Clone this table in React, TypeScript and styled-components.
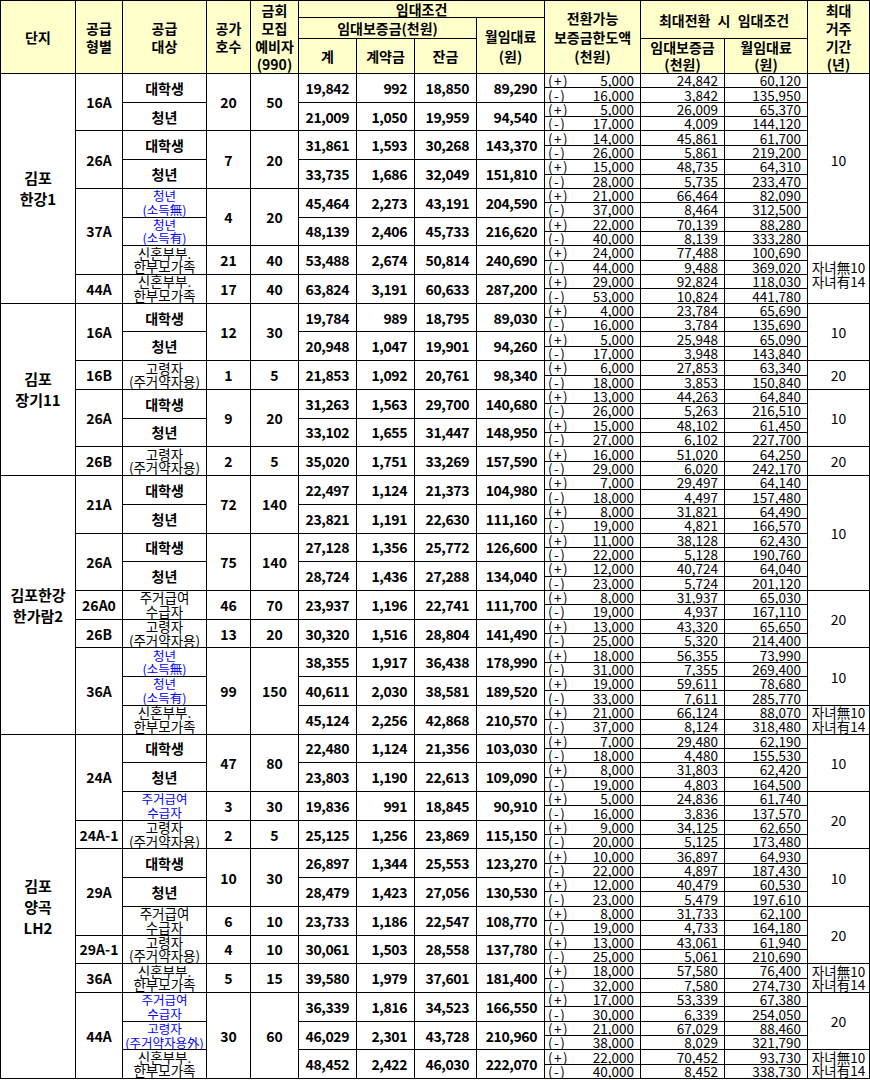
import { FC } from 'react';
import styled, { createGlobalStyle } from 'styled-components';

const GlobalStyle = createGlobalStyle`
  body {
    margin: 0;
    background: #fff;
    color: #000;
    font-family: 'Noto Sans CJK KR', 'Noto Sans', sans-serif;
  }
`;

const Table = styled.table`
  border-collapse: collapse;
  table-layout: fixed;
  width: 869px;
  border: 1px solid #000;
`;

const HeadRow = styled.tr<{ $h: number }>`
  height: ${(p) => p.$h}px;
`;

const Th = styled.th<{ $lh?: number }>`
  background: #ffffcc;
  border: 1px solid #000;
  padding: 0;
  font-size: 14px;
  font-weight: 700;
  line-height: ${(p) => p.$lh ?? 18}px;
  text-align: center;
  vertical-align: middle;
  white-space: nowrap;
  overflow: hidden;
`;

const SubRow = styled.tr`
  height: 14.36px;
`;

const Cell = styled.td<{
  $align?: 'center' | 'right';
  $blue?: boolean;
  $light?: boolean;
  $size?: number;
  $lh?: number;
}>`
  border: 1px solid #000;
  padding: 0 ${(p) => (p.$align === 'right' ? '7px' : '0')} 0 0;
  text-align: ${(p) => p.$align ?? 'center'};
  vertical-align: middle;
  font-size: ${(p) => p.$size ?? 14}px;
  font-weight: ${(p) => (p.$light ? 400 : 700)};
  line-height: ${(p) => p.$lh ?? 14}px;
  letter-spacing: ${(p) => (p.$align === 'right' ? '-0.4px' : 'normal')};
  color: ${(p) => (p.$blue ? '#0000ff' : '#000')};
  white-space: nowrap;
  overflow: hidden;
`;

const SubCell = styled.td`
  border: 1px solid #000;
  padding: 0 6px 0 3px;
  text-align: right;
  vertical-align: middle;
  font-size: 13.5px;
  font-weight: 400;
  line-height: 13px;
  white-space: nowrap;
  overflow: hidden;
`;

const Split = styled.div`
  display: flex;
  justify-content: space-between;
`;

const Sign = styled.span`
  letter-spacing: 1.5px;
`;

type Triple = [string, string, string];

interface Row {
  complex?: [string[], number];
  type?: [string, number];
  target: string[];
  blue?: boolean;
  units?: [string, string, number];
  money: [string, string, string, string];
  plus: Triple;
  minus: Triple;
  period?: [string[], number];
}

const FAM = ['신혼부부.', '한부모가족'];
const KIDS = ['자녀無10', '자녀有14'];
const OLD = ['고령자', '(주거약자용)'];
const WEL = ['주거급여', '수급자'];

const rows: Row[] = [
  { complex: [['김포', '한강1'], 8], type: ['16A', 2], target: ['대학생'], units: ['20', '50', 2], money: ['19,842', '992', '18,850', '89,290'], plus: ['5,000', '24,842', '60,120'], minus: ['16,000', '3,842', '135,950'], period: [['10'], 6] },
  { target: ['청년'], money: ['21,009', '1,050', '19,959', '94,540'], plus: ['5,000', '26,009', '65,370'], minus: ['17,000', '4,009', '144,120'] },
  { type: ['26A', 2], target: ['대학생'], units: ['7', '20', 2], money: ['31,861', '1,593', '30,268', '143,370'], plus: ['14,000', '45,861', '61,700'], minus: ['26,000', '5,861', '219,200'] },
  { target: ['청년'], money: ['33,735', '1,686', '32,049', '151,810'], plus: ['15,000', '48,735', '64,310'], minus: ['28,000', '5,735', '233,470'] },
  { type: ['37A', 3], target: ['청년', '(소득無)'], blue: true, units: ['4', '20', 2], money: ['45,464', '2,273', '43,191', '204,590'], plus: ['21,000', '66,464', '82,090'], minus: ['37,000', '8,464', '312,500'] },
  { target: ['청년', '(소득有)'], blue: true, money: ['48,139', '2,406', '45,733', '216,620'], plus: ['22,000', '70,139', '88,280'], minus: ['40,000', '8,139', '333,280'] },
  { target: FAM, units: ['21', '40', 1], money: ['53,488', '2,674', '50,814', '240,690'], plus: ['24,000', '77,488', '100,690'], minus: ['44,000', '9,488', '369,020'], period: [KIDS, 2] },
  { type: ['44A', 1], target: FAM, units: ['17', '40', 1], money: ['63,824', '3,191', '60,633', '287,200'], plus: ['29,000', '92,824', '118,030'], minus: ['53,000', '10,824', '441,780'] },

  { complex: [['김포', '장기11'], 6], type: ['16A', 2], target: ['대학생'], units: ['12', '30', 2], money: ['19,784', '989', '18,795', '89,030'], plus: ['4,000', '23,784', '65,690'], minus: ['16,000', '3,784', '135,690'], period: [['10'], 2] },
  { target: ['청년'], money: ['20,948', '1,047', '19,901', '94,260'], plus: ['5,000', '25,948', '65,090'], minus: ['17,000', '3,948', '143,840'] },
  { type: ['16B', 1], target: OLD, units: ['1', '5', 1], money: ['21,853', '1,092', '20,761', '98,340'], plus: ['6,000', '27,853', '63,340'], minus: ['18,000', '3,853', '150,840'], period: [['20'], 1] },
  { type: ['26A', 2], target: ['대학생'], units: ['9', '20', 2], money: ['31,263', '1,563', '29,700', '140,680'], plus: ['13,000', '44,263', '64,840'], minus: ['26,000', '5,263', '216,510'], period: [['10'], 2] },
  { target: ['청년'], money: ['33,102', '1,655', '31,447', '148,950'], plus: ['15,000', '48,102', '61,450'], minus: ['27,000', '6,102', '227,700'] },
  { type: ['26B', 1], target: OLD, units: ['2', '5', 1], money: ['35,020', '1,751', '33,269', '157,590'], plus: ['16,000', '51,020', '64,250'], minus: ['29,000', '6,020', '242,170'], period: [['20'], 1] },

  { complex: [['김포한강', '한가람2'], 9], type: ['21A', 2], target: ['대학생'], units: ['72', '140', 2], money: ['22,497', '1,124', '21,373', '104,980'], plus: ['7,000', '29,497', '64,140'], minus: ['18,000', '4,497', '157,480'], period: [['10'], 4] },
  { target: ['청년'], money: ['23,821', '1,191', '22,630', '111,160'], plus: ['8,000', '31,821', '64,490'], minus: ['19,000', '4,821', '166,570'] },
  { type: ['26A', 2], target: ['대학생'], units: ['75', '140', 2], money: ['27,128', '1,356', '25,772', '126,600'], plus: ['11,000', '38,128', '62,430'], minus: ['22,000', '5,128', '190,760'] },
  { target: ['청년'], money: ['28,724', '1,436', '27,288', '134,040'], plus: ['12,000', '40,724', '64,040'], minus: ['23,000', '5,724', '201,120'] },
  { type: ['26A0', 1], target: WEL, units: ['46', '70', 1], money: ['23,937', '1,196', '22,741', '111,700'], plus: ['8,000', '31,937', '65,030'], minus: ['19,000', '4,937', '167,110'], period: [['20'], 2] },
  { type: ['26B', 1], target: OLD, units: ['13', '20', 1], money: ['30,320', '1,516', '28,804', '141,490'], plus: ['13,000', '43,320', '65,650'], minus: ['25,000', '5,320', '214,400'] },
  { type: ['36A', 3], target: ['청년', '(소득無)'], blue: true, units: ['99', '150', 3], money: ['38,355', '1,917', '36,438', '178,990'], plus: ['18,000', '56,355', '73,990'], minus: ['31,000', '7,355', '269,400'], period: [['10'], 2] },
  { target: ['청년', '(소득有)'], blue: true, money: ['40,611', '2,030', '38,581', '189,520'], plus: ['19,000', '59,611', '78,680'], minus: ['33,000', '7,611', '285,770'] },
  { target: FAM, money: ['45,124', '2,256', '42,868', '210,570'], plus: ['21,000', '66,124', '88,070'], minus: ['37,000', '8,124', '318,480'], period: [KIDS, 1] },

  { complex: [['김포', '양곡', 'LH2'], 12], type: ['24A', 3], target: ['대학생'], units: ['47', '80', 2], money: ['22,480', '1,124', '21,356', '103,030'], plus: ['7,000', '29,480', '62,190'], minus: ['18,000', '4,480', '155,530'], period: [['10'], 2] },
  { target: ['청년'], money: ['23,803', '1,190', '22,613', '109,090'], plus: ['8,000', '31,803', '62,420'], minus: ['19,000', '4,803', '164,500'] },
  { target: WEL, blue: true, units: ['3', '30', 1], money: ['19,836', '991', '18,845', '90,910'], plus: ['5,000', '24,836', '61,740'], minus: ['16,000', '3,836', '137,570'], period: [['20'], 2] },
  { type: ['24A-1', 1], target: OLD, units: ['2', '5', 1], money: ['25,125', '1,256', '23,869', '115,150'], plus: ['9,000', '34,125', '62,650'], minus: ['20,000', '5,125', '173,480'] },
  { type: ['29A', 3], target: ['대학생'], units: ['10', '30', 2], money: ['26,897', '1,344', '25,553', '123,270'], plus: ['10,000', '36,897', '64,930'], minus: ['22,000', '4,897', '187,430'], period: [['10'], 2] },
  { target: ['청년'], money: ['28,479', '1,423', '27,056', '130,530'], plus: ['12,000', '40,479', '60,530'], minus: ['23,000', '5,479', '197,610'] },
  { target: WEL, units: ['6', '10', 1], money: ['23,733', '1,186', '22,547', '108,770'], plus: ['8,000', '31,733', '62,100'], minus: ['19,000', '4,733', '164,180'], period: [['20'], 2] },
  { type: ['29A-1', 1], target: OLD, units: ['4', '10', 1], money: ['30,061', '1,503', '28,558', '137,780'], plus: ['13,000', '43,061', '61,940'], minus: ['25,000', '5,061', '210,690'] },
  { type: ['36A', 1], target: FAM, units: ['5', '15', 1], money: ['39,580', '1,979', '37,601', '181,400'], plus: ['18,000', '57,580', '76,400'], minus: ['32,000', '7,580', '274,730'], period: [KIDS, 1] },
  { type: ['44A', 3], target: WEL, blue: true, units: ['30', '60', 3], money: ['36,339', '1,816', '34,523', '166,550'], plus: ['17,000', '53,339', '67,380'], minus: ['30,000', '6,339', '254,050'], period: [['20'], 2] },
  { target: ['고령자', '(주거약자용外)'], blue: true, money: ['46,029', '2,301', '43,728', '210,960'], plus: ['21,000', '67,029', '88,460'], minus: ['38,000', '8,029', '321,790'] },
  { target: FAM, money: ['48,452', '2,422', '46,030', '222,070'], plus: ['22,000', '70,452', '93,730'], minus: ['40,000', '8,452', '338,730'], period: [KIDS, 1] },
];

const widths = [75, 47, 84, 44, 48, 58, 58, 62, 68, 96, 84, 83, 62];

const Lines: FC<{ lines: string[] }> = ({ lines }) => (
  <>
    {lines.map((l, i) => (
      <div key={i}>{l}</div>
    ))}
  </>
);

const Conversion: FC<{ sign: string; values: Triple }> = ({ sign, values }) => (
  <>
    <SubCell>
      <Split>
        <Sign>({sign})</Sign>
        <span>{values[0]}</span>
      </Split>
    </SubCell>
    <SubCell>{values[1]}</SubCell>
    <SubCell>{values[2]}</SubCell>
  </>
);

const BodyRow: FC<{ row: Row }> = ({ row }) => {
  const twoLine = row.target.length > 1;
  const kids = row.period && row.period[0].length > 1;
  return (
    <>
      <SubRow>
        {row.complex && (
          <Cell rowSpan={row.complex[1] * 2} $size={15} $lh={21}>
            <Lines lines={row.complex[0]} />
          </Cell>
        )}
        {row.type && <Cell rowSpan={row.type[1] * 2}>{row.type[0]}</Cell>}
        <Cell
          rowSpan={2}
          $blue={row.blue}
          $light={twoLine}
          $size={twoLine ? (row.blue ? 12.5 : 13.5) : 14}
          $lh={twoLine ? 13.5 : 14}
        >
          <Lines lines={row.target} />
        </Cell>
        {row.units && (
          <>
            <Cell rowSpan={row.units[2] * 2}>{row.units[0]}</Cell>
            <Cell rowSpan={row.units[2] * 2}>{row.units[1]}</Cell>
          </>
        )}
        {row.money.map((m, i) => (
          <Cell key={i} rowSpan={2} $align="right">
            {m}
          </Cell>
        ))}
        <Conversion sign="+" values={row.plus} />
        {row.period && (
          <Cell
            rowSpan={row.period[1] * 2}
            $light
            $size={kids ? 13.5 : 14}
            $lh={kids ? 13.5 : 18}
          >
            <Lines lines={row.period[0]} />
          </Cell>
        )}
      </SubRow>
      <SubRow>
        <Conversion sign="-" values={row.minus} />
      </SubRow>
    </>
  );
};

export default function App() {
  return (
    <>
      <GlobalStyle />
      <Table>
        <colgroup>
          {widths.map((w, i) => (
            <col key={i} style={{ width: w }} />
          ))}
        </colgroup>
        <thead>
          <HeadRow $h={17}>
            <Th rowSpan={3}>단지</Th>
            <Th rowSpan={3}>
              공급
              <br />
              형별
            </Th>
            <Th rowSpan={3}>
              공급
              <br />
              대상
            </Th>
            <Th rowSpan={3}>
              공가
              <br />
              호수
            </Th>
            <Th rowSpan={3}>
              금회
              <br />
              모집
              <br />
              예비자
              <br />
              (990)
            </Th>
            <Th colSpan={4} $lh={15}>
              임대조건
            </Th>
            <Th rowSpan={3} $lh={19}>
              전환가능
              <br />
              보증금한도액
              <br />
              (천원)
            </Th>
            <Th colSpan={2} rowSpan={2} style={{ wordSpacing: 4 }}>
              최대전환 시 임대조건
            </Th>
            <Th rowSpan={3}>
              최대
              <br />
              거주
              <br />
              기간
              <br />
              (년)
            </Th>
          </HeadRow>
          <HeadRow $h={21}>
            <Th colSpan={3}>임대보증금(천원)</Th>
            <Th rowSpan={2} $lh={20}>
              월임대료
              <br />
              (원)
            </Th>
          </HeadRow>
          <HeadRow $h={35}>
            <Th>계</Th>
            <Th>계약금</Th>
            <Th>잔금</Th>
            <Th $lh={17}>
              임대보증금
              <br />
              (천원)
            </Th>
            <Th $lh={17}>
              월임대료
              <br />
              (원)
            </Th>
          </HeadRow>
        </thead>
        <tbody>
          {rows.map((r, i) => (
            <BodyRow key={i} row={r} />
          ))}
        </tbody>
      </Table>
    </>
  );
}
